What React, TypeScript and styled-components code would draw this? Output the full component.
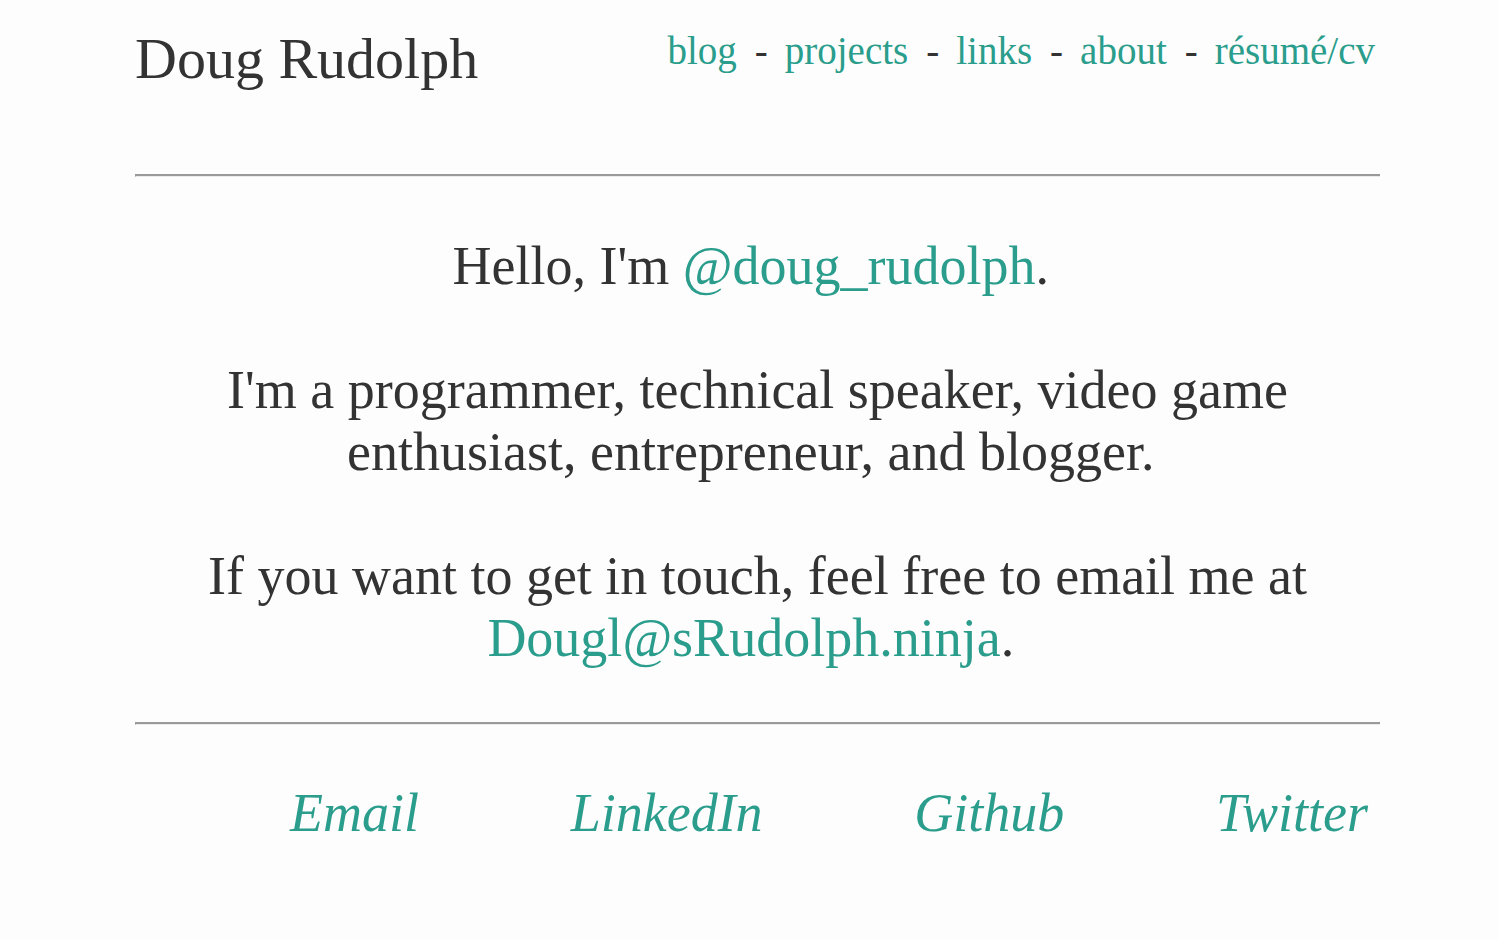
import * as React from "react";
import styled, { createGlobalStyle } from "styled-components";

const GlobalStyle = createGlobalStyle`
  body {
    margin: 0;
    background: #fdfdfd;
    color: #333;
    font-family: "Liberation Serif", "Times New Roman", serif;
  }
`;

const teal = "#2a9d8c";

const Page = styled.div`
  padding: 0 118px 60px 135px;
`;

const Header = styled.header`
  display: flex;
  justify-content: space-between;
  align-items: flex-start;
  padding-top: 25px;
  padding-bottom: 82px;
`;

const Title = styled.h1`
  margin: 0;
  font-size: 58px;
  font-weight: normal;
  line-height: normal;
`;

const Nav = styled.nav`
  display: flex;
  align-items: baseline;
  gap: 11px;
  margin-top: 3px;
  margin-right: 5px;
  font-size: 39px;
  line-height: normal;
`;

const NavLink = styled.a`
  color: ${teal};
  text-decoration: none;
`;

const Dash = styled.span`
  color: #333;
  margin: 0 6px 0 7px;
`;

const Rule = styled.hr`
  margin: 0;
  border: none;
  border-top: 2px solid #9a9a9a;
  border-left: 1px solid #9a9a9a;
  border-bottom: 1px solid #ebebeb;
`;

const Intro = styled.section`
  padding: 58px 0 53px;
  text-align: center;
  font-size: 54px;
  line-height: 62px;
`;

const Para = styled.p`
  margin: 0;
  & + & {
    margin-top: 62px;
  }
`;

const Accent = styled.a`
  color: ${teal};
  text-decoration: none;
`;

const Footer = styled.footer`
  display: flex;
  justify-content: space-between;
  padding: 57px 12px 0 155px;
  font-size: 54px;
  line-height: 62px;
`;

const SocialLink = styled.a`
  color: ${teal};
  font-style: italic;
  text-decoration: none;
`;

const navItems = ["blog", "projects", "links", "about", "résumé/cv"];
const socials = ["Email", "LinkedIn", "Github", "Twitter"];

export default function App() {
  return (
    <Page>
      <GlobalStyle />
      <Header>
        <Title>Doug Rudolph</Title>
        <Nav>
          {navItems.map((item, i) => (
            <React.Fragment key={item}>
              {i > 0 && <Dash>-</Dash>}
              <NavLink href="#">{item}</NavLink>
            </React.Fragment>
          ))}
        </Nav>
      </Header>
      <Rule />
      <Intro>
        <Para>
          Hello, I'm <Accent href="#">@doug_rudolph</Accent>.{"\u00a0"}
        </Para>
        <Para>
          I'm a programmer, technical speaker, video game enthusiast,
          entrepreneur, and blogger.{"\u00a0"}
        </Para>
        <Para>
          If you want to get in touch, feel free to email me at{" "}
          <Accent href="#">Dougl@sRudolph.ninja</Accent>.{"\u00a0"}
        </Para>
      </Intro>
      <Rule />
      <Footer>
        {socials.map((s) => (
          <SocialLink key={s} href="#">
            {s}
          </SocialLink>
        ))}
      </Footer>
    </Page>
  );
}
